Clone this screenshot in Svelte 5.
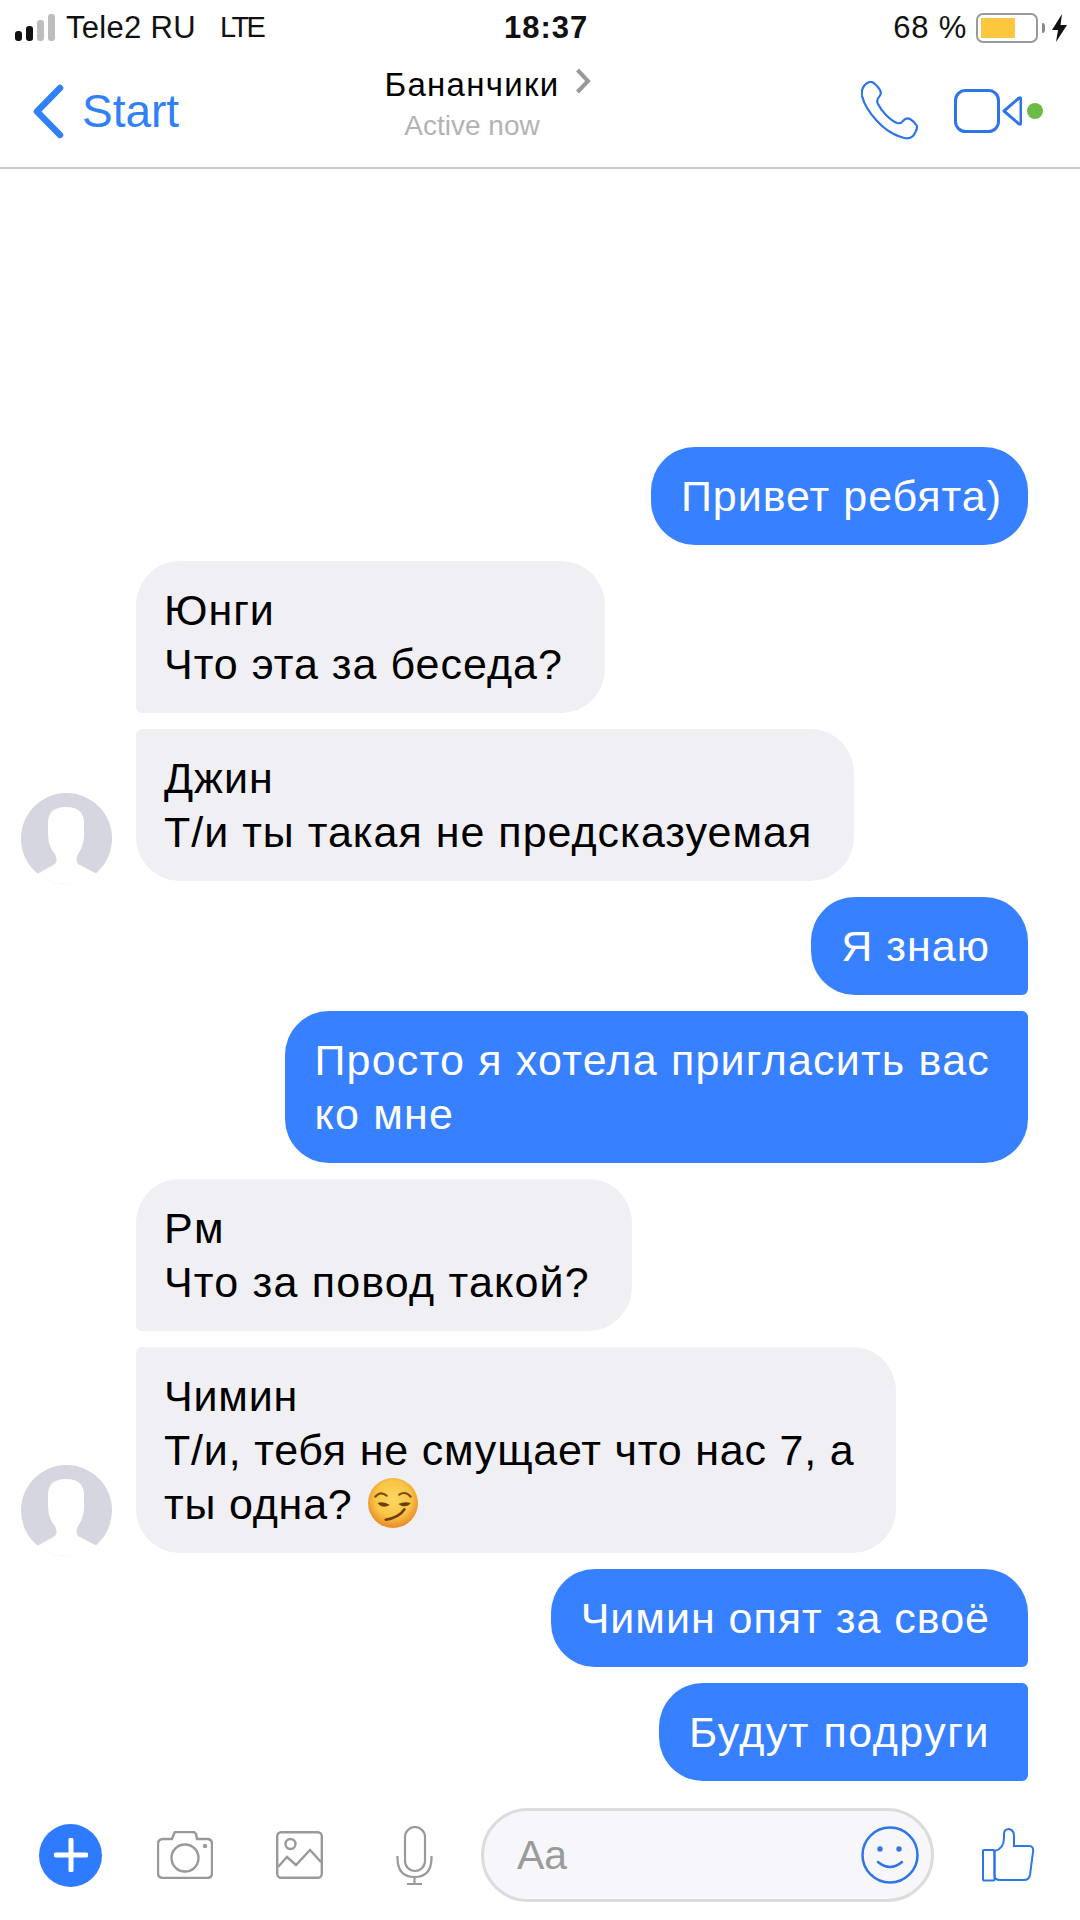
<script lang="ts">
    type Msg = {
        text: string;
        mine?: boolean;
        top?: boolean;     // flat corner on top (continues a group)
        bottom?: boolean;  // flat corner at the bottom
        avatar?: boolean;
        smirk?: boolean;
        tight?: boolean;
        spacing?: number;
    };

    const messages: Msg[] = [
        { text: "Привет ребята)", mine: true, tight: true },
        { text: "Юнги\nЧто эта за беседа?", bottom: true },
        { text: "Джин\nТ/и ты такая не предсказуемая", top: true, avatar: true },
        { text: "Я знаю", mine: true, bottom: true },
        { text: "Просто я хотела пригласить вас\nко мне", mine: true, top: true, spacing: 1.2 },
        { text: "Рм\nЧто за повод такой?", bottom: true, spacing: 1.2 },
        { text: "Чимин\nТ/и, тебя не смущает что нас 7, а\nты одна? ", top: true, avatar: true, smirk: true, spacing: 0.8 },
        { text: "Чимин опят за своё", mine: true, bottom: true },
        { text: "Будут подруги", mine: true, top: true, bottom: true, spacing: 1.5 },
    ];
</script>

<div class="page">
    <div class="status">
        <div class="carrier">
            <div class="signal"><i></i><i></i><i class="off"></i><i class="off"></i></div>
            <span class="op">Tele2 RU</span>
            <span class="lte">LTE</span>
        </div>
        <div class="time">18:37</div>
        <div class="power">
            <span class="pct">68 %</span>
            <div class="battery"><div class="level"></div></div>
            <div class="nub"></div>
            <svg width="17" height="28" viewBox="0 0 17 28"><path d="M11 0 L1 16 H7 L5 28 L16 11 H9.500 Z" fill="#111" /></svg>
        </div>
    </div>

    <div class="nav">
        <div class="back">
            <svg width="33" height="57" viewBox="0 0 33 57"><path d="M28 5 L5 28.500 L28 52" fill="none" stroke="#3080f8" stroke-width="6.500" stroke-linecap="round" stroke-linejoin="round" /></svg>
            <span>Start</span>
        </div>
        <div class="title">
            <div class="name">Бананчики<svg class="more" width="16" height="26" viewBox="0 0 16 26"><path d="M2.500 2 L13 13 L2.500 24" fill="none" stroke="#999" stroke-width="4" /></svg></div>
            <div class="active">Active now</div>
        </div>
        <div class="actions">
            <svg width="58" height="60" viewBox="0 0 58 60"><path d="M3 5 Q7 0 11 1 Q15 3 19 9 Q21 13 18 16 Q15 19 17 23 Q20 29 25 34 Q31 40 36 42 Q40 43 42 40 Q45 36 49 38 Q54 41 56 45 Q56 50 52 55 Q48 59 40 56 Q27 52 16 40 Q4 27 1 15 Q0 9 3 5Z" fill="none" stroke="#2e75e8" stroke-width="2.200" /></svg>
            <svg class="video" width="68" height="44" viewBox="0 0 68 44"><rect x="1.500" y="1.500" width="43" height="41" rx="10" fill="none" stroke="#2e75e8" stroke-width="3" /><path d="M50 22 L65 9 Q67 8 67 11 V33 Q67 36 65 35 Z" fill="none" stroke="#2e75e8" stroke-width="3" stroke-linejoin="round" /></svg>
            <div class="online"></div>
        </div>
    </div>

    <div class="chat">
        {#each messages as m}
            <div class="row" class:mine={m.mine}>
                {#if !m.mine}
                    <div class="avatar-slot">
                        {#if m.avatar}
                            <svg class="avatar" width="91" height="91" viewBox="0 0 91 91">
                                <circle cx="45.500" cy="45.500" r="45.500" fill="#d6d6e0" />
                                <path d="M16 81 L34 71 Q37 67 34 61 Q27 53 27 41 V30 Q27 14 45 14 Q63 14 63 30 V41 Q63 53 57 61 Q54 67 57 71 L76 81 Q62 91 46 91 Q29 91 16 81Z" fill="#fff" />
                            </svg>
                        {/if}
                    </div>
                {/if}
                <div class="bubble" class:top={m.top} class:bottom={m.bottom} class:tight={m.tight} style:letter-spacing={m.spacing ? `${m.spacing}px` : null}>
                    {m.text}{#if m.smirk}<svg class="smirk" width="50" height="50" viewBox="0 0 48 48">
                        <defs>
                            <radialGradient id="face" cx="50%" cy="42%" r="55%">
                                <stop offset="0%" stop-color="#fbd85f" />
                                <stop offset="65%" stop-color="#f9c545" />
                                <stop offset="100%" stop-color="#ea8f2b" />
                            </radialGradient>
                        </defs>
                        <circle cx="24" cy="24" r="24" fill="url(#face)" />
                        <path d="M7 18 Q12 12 18 17 M30 16 Q36 12 41 18" fill="none" stroke="#7a4a12" stroke-width="2" stroke-linecap="round" />
                        <path d="M9 24 Q15 22 21 26 Q15 29 11 26 Z M29 25 Q35 22 41 24 Q38 28 33 27 Z" fill="#6b3f10" />
                        <path d="M17 40 Q30 38 35 30" fill="none" stroke="#6b3f10" stroke-width="2.500" stroke-linecap="round" />
                    </svg>{/if}
                </div>
            </div>
        {/each}
    </div>

    <div class="composer">
        <div class="plus">
            <svg width="34" height="34" viewBox="0 0 34 34"><path d="M17 2 V32 M2 17 H32" stroke="#fff" stroke-width="5" stroke-linecap="round" /></svg>
        </div>
        <svg class="camera" width="56" height="48" viewBox="0 0 56 48">
            <path d="M6 8 H15 L17 3 Q17 1 19 1 H36 Q38 1 39 3 L40 8 H50 Q55 8 55 13 V42 Q55 47 50 47 H6 Q1 47 1 42 V13 Q1 8 6 8Z" fill="none" stroke="#999" stroke-width="2.400" />
            <circle cx="28" cy="27" r="13.500" fill="none" stroke="#999" stroke-width="2.400" />
            <circle cx="48" cy="15" r="2.200" fill="#999" />
        </svg>
        <svg class="image" width="47" height="48" viewBox="0 0 47 48">
            <rect x="1.200" y="1.200" width="44.600" height="45.600" rx="4" fill="none" stroke="#999" stroke-width="2.400" />
            <circle cx="14.500" cy="13" r="5" fill="none" stroke="#999" stroke-width="2.400" />
            <path d="M2 36 L11 26 L20 34 L34 19 L45 31" fill="none" stroke="#999" stroke-width="2.400" />
        </svg>
        <svg class="mic" width="37" height="59" viewBox="0 0 37 59">
            <rect x="9" y="1" width="20" height="44" rx="10" fill="none" stroke="#999" stroke-width="2.200" />
            <path d="M1.500 30 V33 Q2 51 18.500 51 Q35 51 35.500 33 V30 M18.500 51 V58 M11 58 H26" fill="none" stroke="#999" stroke-width="2.200" />
        </svg>
        <div class="input">
            <span class="placeholder">Aa</span>
            <svg width="58" height="60" viewBox="0 0 58 60">
                <circle cx="29" cy="30" r="27.500" fill="none" stroke="#2e75e8" stroke-width="2.500" />
                <circle cx="19" cy="24" r="2.700" fill="#2e75e8" />
                <circle cx="38" cy="24" r="2.700" fill="#2e75e8" />
                <path d="M17 37 Q29 47 41 37" fill="none" stroke="#2e75e8" stroke-width="2.500" stroke-linecap="round" />
            </svg>
        </div>
        <svg class="like" width="53" height="54" viewBox="0 0 53 54">
            <rect x="1" y="22" width="11.500" height="30.500" rx="1" fill="none" stroke="#2e75e8" stroke-width="2" />
            <path d="M12.500 23 Q22 21 22 10 V6 Q22 1 27 1 Q32 2 32 8 V18 H47 Q52 18 51 24 L48 47 Q47 52 42 52 H18 Q12.500 52 12.500 47 Z" fill="none" stroke="#2e75e8" stroke-width="2" />
        </svg>
    </div>
</div>

<style>
    :global(body) {
        margin: 0;
        background: #fff;
    }
    .page {
        width: 1080px;
        height: 1920px;
        display: flex;
        flex-direction: column;
        font-family: "Liberation Sans", Arial, sans-serif;
        color: #000;
        overflow: hidden;
    }

    .status {
        height: 55px;
        display: grid;
        grid-template-columns: 504px auto 1fr;
        align-items: center;
        font-size: 31px;
        color: #111;
    }
    .carrier {
        display: flex;
        align-items: center;
        padding-left: 15px;
    }
    .op {
        letter-spacing: 0.3px;
    }
    .signal {
        display: flex;
        align-items: flex-end;
        gap: 4px;
        height: 27px;
        margin-right: 11px;
    }
    .signal i {
        width: 7px;
        border-radius: 3px;
        background: #111;
    }
    .signal i:nth-child(1) { height: 10px; }
    .signal i:nth-child(2) { height: 15px; }
    .signal i:nth-child(3) { height: 21px; }
    .signal i:nth-child(4) { height: 27px; }
    .signal i.off { background: #bdbdbd; }
    .lte {
        margin-left: 24px;
        font-size: 29px;
        letter-spacing: -2.500px;
    }
    .time {
        font-size: 31px;
        font-weight: bold;
        letter-spacing: 1px;
    }
    .power {
        display: flex;
        align-items: center;
        justify-content: flex-end;
        padding-right: 12px;
    }
    .pct {
        letter-spacing: 0.8px;
    }
    .battery {
        width: 62px;
        height: 30px;
        box-sizing: border-box;
        margin-left: 9px;
        padding: 3px;
        border: 2px solid #9a9a9a;
        border-radius: 7px;
    }
    .level {
        width: 34px;
        height: 100%;
        background: #fdc63f;
    }
    .nub {
        width: 3px;
        height: 10px;
        margin: 0 6px 0 4px;
        background: #8a8a8a;
        border-radius: 0 3px 3px 0;
    }

    .nav {
        height: 114px;
        display: flex;
        align-items: center;
        border-bottom: 2px solid #c8c8c8;
        box-sizing: border-box;
    }
    .back {
        width: 320px;
        display: flex;
        align-items: center;
        gap: 17px;
        padding-left: 32px;
        box-sizing: border-box;
        font-size: 46px;
        color: #3080f8;
    }
    .title {
        width: 304px;
        text-align: center;
        margin-top: -14px;
    }
    .name {
        position: relative;
        display: inline-block;
        font-size: 33px;
        letter-spacing: 1.300px;
    }
    .more {
        position: absolute;
        left: calc(100% + 15px);
        top: 2px;
    }
    .active {
        margin-top: 6px;
        font-size: 28px;
        color: #b3b3b3;
    }
    .actions {
        flex: 1;
        display: flex;
        align-items: center;
        padding-left: 237px;
    }
    .video {
        margin-left: 35px;
    }
    .online {
        width: 16px;
        height: 16px;
        margin-left: 5px;
        border-radius: 50%;
        background: #6cbb45;
    }

    .chat {
        flex: 1;
        min-height: 0;
        display: flex;
        flex-direction: column;
        justify-content: flex-end;
        gap: 16px;
    }
    .row {
        display: flex;
        align-items: flex-end;
        padding-left: 21px;
    }
    .row.mine {
        justify-content: flex-end;
        padding-right: 52px;
    }
    .avatar-slot {
        flex: none;
        width: 91px;
        margin-right: 24px;
    }
    .avatar {
        display: block;
        margin-bottom: -3px;
    }
    .bubble {
        padding: 22px 42px 22px 28px;
        font-size: 43px;
        letter-spacing: 1px;
        line-height: 54px;
        white-space: pre-line;
        background: #f0eff4;
        border-radius: 44px;
    }
    .bubble.top {
        border-top-left-radius: 6px;
    }
    .bubble.bottom {
        border-bottom-left-radius: 6px;
    }
    .mine .bubble {
        padding: 22px 38px 22px 30px;
        background: #3780ff;
        color: #fff;
    }
    .mine .bubble.tight {
        padding-right: 26px;
    }
    .mine .bubble.top {
        border-top-left-radius: 44px;
        border-top-right-radius: 6px;
    }
    .mine .bubble.bottom {
        border-bottom-left-radius: 44px;
        border-bottom-right-radius: 6px;
    }
    .smirk {
        margin-left: 3px;
        vertical-align: -9px;
    }

    .composer {
        flex: none;
        height: 139px;
        display: flex;
        align-items: center;
        padding: 9px 0 0 39px;
        box-sizing: border-box;
    }
    .plus {
        width: 63px;
        height: 63px;
        display: flex;
        align-items: center;
        justify-content: center;
        border-radius: 50%;
        background: #2e7bff;
    }
    .camera { margin-left: 55px; }
    .image { margin-left: 63px; }
    .mic { margin-left: 73px; }
    .input {
        width: 453px;
        height: 94px;
        box-sizing: border-box;
        margin-left: 48px;
        display: flex;
        align-items: center;
        justify-content: space-between;
        padding: 0 12px 0 33px;
        background: #f7f6fa;
        border: 3px solid #dcdcdc;
        border-radius: 47px;
    }
    .placeholder {
        font-size: 41px;
        color: #9b9b9b;
    }
    .like { margin-left: 48px; }
</style>
